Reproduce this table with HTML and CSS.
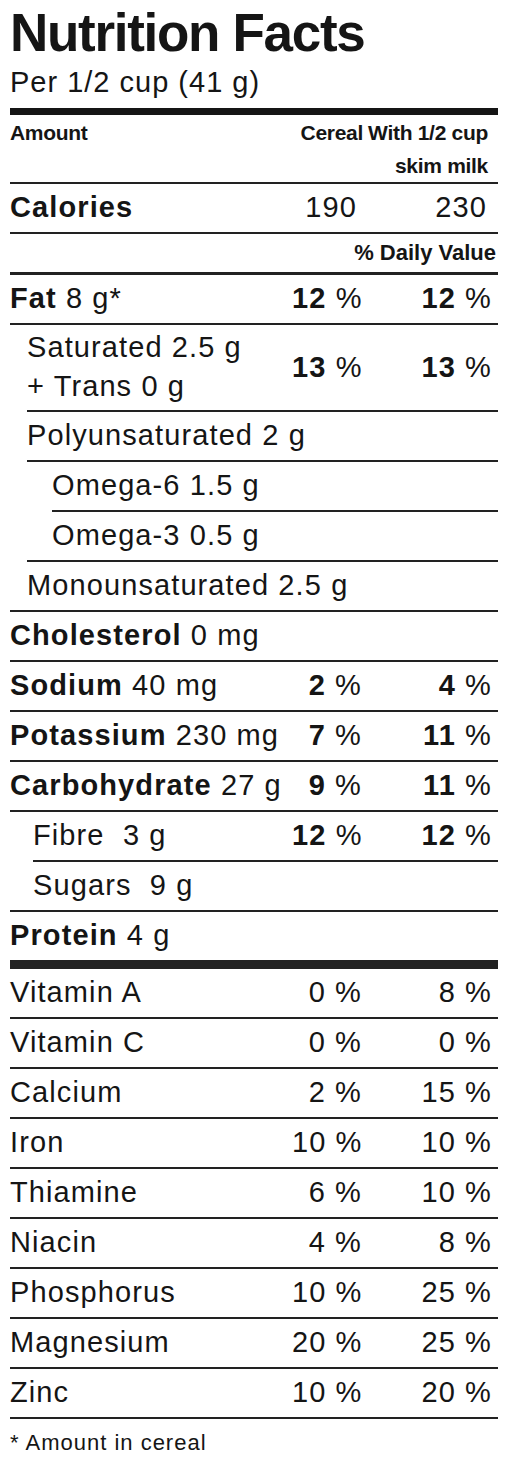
FILE: index.html
```html
<!DOCTYPE html>
<html lang="en">
<head>
    <meta charset="UTF-8">
    <meta name="viewport" content="width=device-width, initial-scale=1.0">
    <title>Nutrition Facts</title>
    <link rel="stylesheet" href="styles.css">
</head>
<body>
    <div class="label">
        <h1 class="title">Nutrition Facts</h1>
        <p class="serving">Per 1/2 cup (41 g)</p>
        <div class="bar"></div>

        <div class="row head">
            <div class="name">Amount</div>
            <div class="col1">Cereal</div>
            <div class="col2">With 1/2 cup skim milk</div>
        </div>
        <div class="row calories">
            <div class="name"><b>Calories</b></div>
            <div class="col1">190</div>
            <div class="col2">230</div>
        </div>
        <div class="row dv">% Daily Value</div>

        <div class="row">
            <div class="name"><b>Fat</b> 8 g*</div>
            <div class="col1"><b>12</b> %</div>
            <div class="col2"><b>12</b> %</div>
        </div>
        <div class="sub sub-fat">
            <div class="row double">
                <div class="name">Saturated 2.5 g<br>+ Trans 0 g</div>
                <div class="col1"><b>13</b> %</div>
                <div class="col2"><b>13</b> %</div>
            </div>
            <div class="row">
                <div class="name">Polyunsaturated 2 g</div>
            </div>
            <div class="sub sub-omega">
                <div class="row">
                    <div class="name">Omega-6 1.5 g</div>
                </div>
                <div class="row">
                    <div class="name">Omega-3 0.5 g</div>
                </div>
            </div>
            <div class="row">
                <div class="name">Monounsaturated 2.5 g</div>
            </div>
        </div>

        <div class="row">
            <div class="name"><b>Cholesterol</b> 0 mg</div>
        </div>
        <div class="row">
            <div class="name"><b>Sodium</b> 40 mg</div>
            <div class="col1"><b>2</b> %</div>
            <div class="col2"><b>4</b> %</div>
        </div>
        <div class="row">
            <div class="name"><b>Potassium</b> 230 mg</div>
            <div class="col1"><b>7</b> %</div>
            <div class="col2"><b>11</b> %</div>
        </div>
        <div class="row">
            <div class="name"><b>Carbohydrate</b> 27 g</div>
            <div class="col1"><b>9</b> %</div>
            <div class="col2"><b>11</b> %</div>
        </div>
        <div class="sub sub-carb">
            <div class="row">
                <div class="name">Fibre&nbsp; 3 g</div>
                <div class="col1"><b>12</b> %</div>
                <div class="col2"><b>12</b> %</div>
            </div>
            <div class="row">
                <div class="name">Sugars&nbsp; 9 g</div>
            </div>
        </div>
        <div class="row protein">
            <div class="name"><b>Protein</b> 4 g</div>
        </div>

        <div class="row">
            <div class="name">Vitamin A</div>
            <div class="col1">0 %</div>
            <div class="col2">8 %</div>
        </div>
        <div class="row">
            <div class="name">Vitamin C</div>
            <div class="col1">0 %</div>
            <div class="col2">0 %</div>
        </div>
        <div class="row">
            <div class="name">Calcium</div>
            <div class="col1">2 %</div>
            <div class="col2">15 %</div>
        </div>
        <div class="row">
            <div class="name">Iron</div>
            <div class="col1">10 %</div>
            <div class="col2">10 %</div>
        </div>
        <div class="row">
            <div class="name">Thiamine</div>
            <div class="col1">6 %</div>
            <div class="col2">10 %</div>
        </div>
        <div class="row">
            <div class="name">Niacin</div>
            <div class="col1">4 %</div>
            <div class="col2">8 %</div>
        </div>
        <div class="row">
            <div class="name">Phosphorus</div>
            <div class="col1">10 %</div>
            <div class="col2">25 %</div>
        </div>
        <div class="row">
            <div class="name">Magnesium</div>
            <div class="col1">20 %</div>
            <div class="col2">25 %</div>
        </div>
        <div class="row last">
            <div class="name">Zinc</div>
            <div class="col1">10 %</div>
            <div class="col2">20 %</div>
        </div>

        <p class="note">* Amount in cereal</p>
    </div>
</body>
</html>
```

FILE: styles.css
```css
body {
    margin: 0;
    padding: 6px 10px 0;
    background-color: #ffffff;
    color: #151515;
    font-family: 'Liberation Sans', Arial, sans-serif;
}
.label {
    width: 488px;
}
.title {
    margin: 0;
    font-size: 53px;
    line-height: 53px;
    font-weight: bold;
    letter-spacing: -1.3px;
}
.serving {
    margin: 6px 0 9px;
    font-size: 29px;
    line-height: 34px;
    letter-spacing: 1px;
}
.bar {
    height: 7px;
    background-color: #151515;
}
.row {
    display: flex;
    align-items: center;
    padding: 0 6px 1px 0;
    font-size: 29px;
    line-height: 47px;
    letter-spacing: 1.1px;
    border-bottom: 2px solid #222;
    white-space: nowrap;
}
.name {
    flex: 1;
}
.col1 {
    width: 70px;
    text-align: right;
}
.col2 {
    width: 130px;
    text-align: right;
}
.head {
    align-items: flex-start;
    padding: 1px 0 0;
    font-size: 21px;
    line-height: 33px;
    font-weight: bold;
    letter-spacing: -0.3px;
    white-space: normal;
}
.head .col1 {
    padding-right: 5px;
    width: 65px;
}
.head .col2 {
    padding-right: 10px;
    width: 120px;
}
.calories .col1,
.calories .col2 {
    padding-right: 5px;
}
.calories .col1 {
    width: 65px;
}
.calories .col2 {
    width: 125px;
}
.dv {
    justify-content: flex-end;
    padding: 0 2px 0 0;
    font-size: 22px;
    line-height: 38px;
    font-weight: bold;
    letter-spacing: 0;
    border-bottom-width: 3px;
}
.double {
    padding: 3px 6px 4px 0;
    line-height: 39px;
}
.sub {
    border-bottom: 2px solid #222;
}
.sub > .row:last-child {
    border-bottom: none;
}
.sub-fat {
    padding-left: 17px;
}
.sub-omega {
    padding-left: 25px;
}
.sub-carb {
    padding-left: 23px;
}
.protein {
    border-bottom-width: 9px;
}
.note {
    margin: 9px 0 0;
    font-size: 22px;
    line-height: 30px;
    letter-spacing: 1px;
}
```
